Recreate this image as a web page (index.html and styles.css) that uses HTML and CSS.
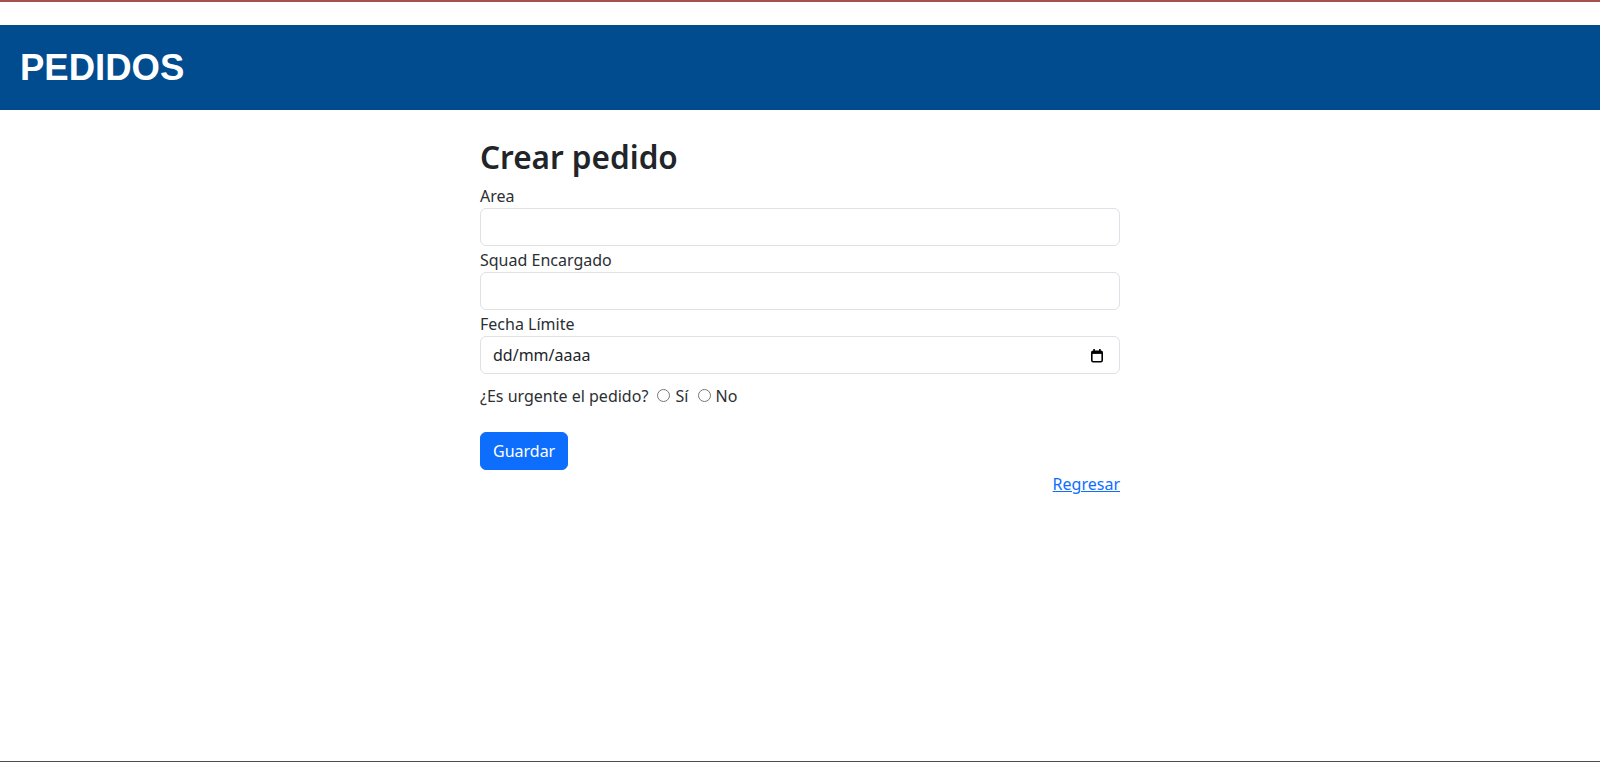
FILE: index.html
```html
<!DOCTYPE html>
<html lang="es">
<head>
<meta charset="utf-8">
<title>Pedidos</title>
<link rel="stylesheet" href="styles.css">
</head>
<body>
<header class="topbar">
  <h1 class="brand">PEDIDOS</h1>
</header>
<main class="page">
  <h2 class="title">Crear pedido</h2>
  <form class="order-form">
    <label class="field-label" for="area">Area</label>
    <input class="field" id="area" type="text">
    <label class="field-label" for="squad">Squad Encargado</label>
    <input class="field" id="squad" type="text">
    <label class="field-label" for="fecha">Fecha Límite</label>
    <div class="field date-field" id="fecha" tabindex="0">
      <span class="date-text">dd/mm/aaaa</span>
      <svg class="cal-icon" width="14" height="15" viewBox="0 0 14 15" aria-hidden="true">
        <rect x="1.8" y="3.3" width="10.4" height="10.4" rx="1.4" fill="none" stroke="#000" stroke-width="1.6"/>
        <rect x="1.8" y="3.3" width="10.4" height="2.6" fill="#000"/>
        <rect x="3.3" y="1" width="1.6" height="3" fill="#000"/>
        <rect x="9.1" y="1" width="1.6" height="3" fill="#000"/>
      </svg>
    </div>
    <div class="urgent">¿Es urgente el pedido? <input type="radio" name="urgente" id="si" class="radio"><label for="si">Sí</label> <input type="radio" name="urgente" id="no" class="radio"><label for="no">No</label></div>
    <button type="button" class="btn-primary">Guardar</button>
  </form>
  <div class="back"><a href="#" class="back-link">Regresar</a></div>
</main>
</body>
</html>
```
FILE: styles.css
```css
html, body {
  height: 100%;
}
body {
  margin: 0;
  box-sizing: border-box;
  border-top: 2px solid #a6504f;
  border-bottom: 1px solid #4d4d4d;
  font-family: "Noto Sans", "Open Sans", sans-serif;
  font-size: 16px;
  line-height: 24px;
  color: #212529;
  background: #fff;
}
.topbar {
  margin-top: 23px;
  height: 85px;
  background: #004c8f;
  display: flex;
  align-items: center;
  padding-left: 20px;
}
.brand {
  margin: 0;
  font-family: "Liberation Sans", Arial, sans-serif;
  font-weight: 700;
  font-size: 36.5px;
  line-height: 40px;
  color: #fff;
}
.page {
  width: 640px;
  margin: 0 auto;
  padding-top: 28px;
}
.title {
  margin: 0 0 6px;
  font-size: 31.5px;
  line-height: 38.4px;
  font-weight: 600;
  color: #212529;
}
.order-form {
  display: flex;
  flex-direction: column;
  align-items: flex-start;
}
.field-label {
  display: block;
  padding-top: 2px;
  line-height: 24px;
  color: #2b2f33;
}
.field {
  box-sizing: border-box;
  width: 100%;
  height: 38px;
  margin: 0;
  padding: 6px 12px;
  border: 1px solid #dee2e6;
  border-radius: 6px;
  font: inherit;
  color: #212529;
  background: #fff;
  outline: none;
}
.date-field {
  display: flex;
  align-items: center;
  justify-content: space-between;
  padding-right: 15px;
}
.cal-icon {
  display: block;
}
.urgent {
  margin-top: 10px;
  margin-bottom: 24px;
  line-height: 24px;
  color: #2b2f33;
}
.radio {
  margin: 3px 5px 0 5px;
  width: 13px;
  height: 13px;
}
.btn-primary {
  height: 38px;
  padding: 6px 12px;
  border: 1px solid #0d6efd;
  border-radius: 6px;
  background: #0d6efd;
  color: #fff;
  font: inherit;
  line-height: 24px;
  cursor: pointer;
}
.back {
  margin-top: 2px;
  text-align: right;
  line-height: 24px;
}
.back-link {
  color: #0d6efd;
  text-decoration: underline;
}
```
